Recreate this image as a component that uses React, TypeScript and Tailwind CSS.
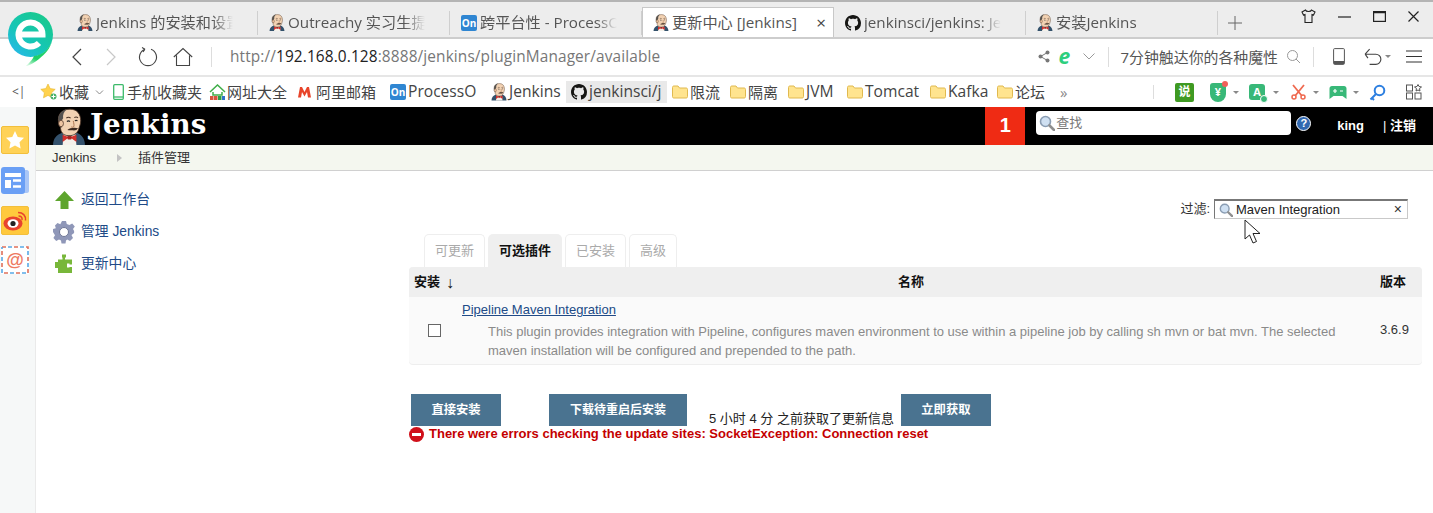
import React from "react";

const CH = '"Open Sans","Noto Sans CJK SC",sans-serif';

function Butler({ s = 16 }: { s?: number }) {
  return (
    <svg width={s} height={s * 1.1} viewBox="0 0 32 35" className="shrink-0">
      <path d="M1 35c0-6 3-10 9-12l6 3 7-3c5 2 8 6 8 12z" fill="#33516b" />
      <path d="M11 24l5 3 6-3 1 11H10z" fill="#f4f1ea" />
      <path d="M10 25l6 2.500-6 4.500zM23 25l-6 2.500 6 4.500z" fill="#d4312c" />
      <rect x="14.500" y="26" width="4" height="3.500" rx="1" fill="#a92420" />
      <path d="M6 11C6 4 11 1 17 1c7 0 10 5 10 11 0 3-1 5-2 8-1 4-5 6-9 6-6 0-8-4-8-8-1-2-2-4-2-7z" fill="#f2d2b3" stroke="#4d3527" strokeWidth=".8" />
      <path d="M9.500 19C7 15 5 11 6.500 7 8 3.500 11 1.500 14 1c-3 2.500-4 5.500-3.500 8.500L9 12c0 2 .5 5 .5 7z" fill="#55524f" />
      <ellipse cx="8.500" cy="14.500" rx="2.300" ry="3" fill="#eec5a2" stroke="#4d3527" strokeWidth=".7" />
      <path d="M13.500 9.500c1-1 3-1 4 0M21 9c1-.7 2.500-.7 3.500.3" fill="none" stroke="#4d3527" strokeWidth="1" />
      <path d="M14 12.500c1-.6 2-.6 3 0M21.500 12c.8-.5 1.800-.5 2.500 0" fill="none" stroke="#222" strokeWidth="1.100" />
      <path d="M20 12c.5 2.500 1 4 .5 5.500-1 .8-2 .5-2.500 0" fill="none" stroke="#a8714f" strokeWidth=".9" />
      <path d="M14.500 20.500c2-2 7-2.500 10-1.500-1 1.500-2 2-4 2-2-.3-4 .3-6-.5z" fill="#3a2a22" />
    </svg>
  );
}

function Github({ s = 16 }: { s?: number }) {
  return (
    <svg width={s} height={s} viewBox="0 0 16 16" className="shrink-0">
      <path
        fill="#161614"
        d="M8 0C3.58 0 0 3.58 0 8c0 3.54 2.29 6.53 5.47 7.59.4.07.55-.17.55-.38 0-.19-.01-.82-.01-1.49-2.01.37-2.53-.49-2.69-.94-.09-.23-.48-.94-.82-1.13-.28-.15-.68-.52-.01-.53.63-.01 1.08.58 1.23.82.72 1.21 1.87.87 2.33.66.07-.52.28-.87.51-1.07-1.78-.2-3.64-.89-3.64-3.95 0-.87.31-1.59.82-2.15-.08-.2-.36-1.02.08-2.12 0 0 .67-.21 2.2.82.64-.18 1.32-.27 2-.27s1.36.09 2 .27c1.53-1.04 2.2-.82 2.2-.82.44 1.1.16 1.92.08 2.12.51.56.82 1.27.82 2.15 0 3.07-1.87 3.75-3.65 3.95.29.25.54.73.54 1.48 0 1.07-.01 1.93-.01 2.2 0 .21.15.46.55.38A8.013 8.013 0 0016 8c0-4.42-3.58-8-8-8z"
      />
    </svg>
  );
}

function On() {
  return (
    <span className="flex h-[16px] w-[16px] shrink-0 items-center justify-center rounded-[2px] bg-[#2f86d2] text-[10px] font-bold leading-none text-white">
      On
    </span>
  );
}

function Folder() {
  return (
    <svg width="16" height="14" viewBox="0 0 16 14" className="shrink-0">
      <path d="M.5 2.500c0-1 .5-1.500 1.500-1.500h4l1.500 2h6.500c1 0 1.500.5 1.500 1.500v7c0 1-.5 1.500-1.500 1.500H2c-1 0-1.500-.5-1.500-1.500z" fill="#ffe48f" stroke="#e0b94f" />
    </svg>
  );
}

function Tab({ icon, text, active, close }: { icon: React.ReactNode; text: string; active?: boolean; close?: boolean }) {
  return (
    <div
      className={
        active
          ? "flex h-[30px] w-[192px] shrink-0 items-center gap-[3px] self-end border-x border-t border-[#c8c8c8] bg-white pl-[10px] pr-[7px] text-[#555]"
          : "mb-[2px] flex h-[24px] w-[192px] shrink-0 items-center gap-[3px] self-end border-r border-[#cfcfcf] pb-[1px] pl-[11px] pr-[24px] text-[#555]"
      }
    >
      {icon}
      <span className={active ? "min-w-0 flex-1 overflow-hidden whitespace-nowrap" : "min-w-0 flex-1 overflow-hidden whitespace-nowrap [mask-image:linear-gradient(to_right,black_85%,transparent)]"}>{text}</span>
      {close && <span className="text-[17px] leading-none text-[#444]">×</span>}
    </div>
  );
}

function Caret({ cls = "" }: { cls?: string }) {
  return <span className={`inline-block h-0 w-0 shrink-0 border-x-[3px] border-t-[3px] border-x-transparent border-t-[#888] ${cls}`} />;
}

function Bm({ icon, text, w, ml, gap, latin, extra }: { icon: React.ReactNode; text: string; w: string; ml: string; gap: string; latin?: boolean; extra?: React.ReactNode }) {
  return (
    <div className={`flex h-[22px] shrink-0 items-center whitespace-nowrap ${w} ${ml}`}>
      <span className={`flex shrink-0 justify-start ${gap}`}>{icon}</span>
      <span className={latin ? "text-[15.600px]" : ""}>{text}</span>
      {extra}
    </div>
  );
}

function Magnifier({ s = 14 }: { s?: number }) {
  return (
    <svg width={s} height={s} viewBox="0 0 16 16" className="shrink-0">
      <circle cx="6.500" cy="6.500" r="5" fill="#cfe0f2" stroke="#8a9db3" strokeWidth="1.600" />
      <path d="M10.500 10.500L15 15" stroke="#8f8f8f" strokeWidth="2.600" strokeLinecap="round" />
    </svg>
  );
}

function NavItem({ icon, text }: { icon: React.ReactNode; text: string }) {
  return (
    <div className="flex h-[32px] items-center">
      <span className="flex w-[24px] shrink-0 justify-center">{icon}</span>
      <span className="ml-[5px] text-[13.800px] text-[#204a87]">{text}</span>
    </div>
  );
}

export default function App() {
  return (
    <div className="relative flex h-[513px] w-[1433px] flex-col overflow-hidden bg-white" style={{ fontFamily: '"Liberation Sans","Noto Sans CJK SC",sans-serif' }}>
      {/* Logo over the browser chrome */}
      <svg width="46" height="55" viewBox="0 0 46 55" className="absolute left-[8px] top-[12px] z-10">
        <defs>
          <linearGradient id="lg" x1="0" y1="1" x2=".8" y2="0">
            <stop offset="0" stopColor="#2bb4f5" />
            <stop offset=".45" stopColor="#16c6b8" />
            <stop offset="1" stopColor="#19c98a" />
          </linearGradient>
          <linearGradient id="lt" x1=".7" y1="0" x2=".2" y2="1">
            <stop offset="0" stopColor="#1fd068" />
            <stop offset=".7" stopColor="#1fd068" />
            <stop offset="1" stopColor="#c8f5d8" />
          </linearGradient>
        </defs>
        <circle cx="22.500" cy="22.500" r="22.500" fill="url(#lg)" />
        <path d="M44 29c-2 8-7 13-13 18-4 3-8 6-13 7 4-4 7-7 8-10 9-1 15-7 18-15z" fill="url(#lt)" />
        <path d="M11 22.500H34.500A12 12 0 1 0 31 31" fill="none" stroke="white" strokeWidth="6" />
      </svg>

      {/* Tab bar */}
      <div className="flex h-[39px] shrink-0 border-t-2 border-b-2 border-t-[#b4b4b4] border-b-[#cdcdcd] bg-[#ededed] pl-[66px] text-[15.200px]" style={{ fontFamily: CH }}>
        <Tab icon={<Butler />} text="Jenkins 的安装和设置" />
        <Tab icon={<Butler />} text="Outreachy 实习生提名" />
        <Tab icon={<On />} text="跨平台性 - ProcessOn" />
        <Tab icon={<Butler />} text="更新中心 [Jenkins]" active close />
        <Tab icon={<Github />} text="jenkinsci/jenkins: Jenkins" />
        <Tab icon={<Butler />} text="安装Jenkins" />
        <div className="flex h-[28px] items-center self-end pl-[10px]">
          <svg width="14" height="14" viewBox="0 0 14 14"><path d="M7 0v14M0 7h14" stroke="#666" strokeWidth="1" /></svg>
        </div>
        <div className="ml-auto flex items-center gap-[22px] pb-[6px] pr-[14px]">
          <svg width="15" height="15" viewBox="0 0 15 15"><path d="M4.500 1L1 3l1.500 3L4 5.500V13.500h7V5.500l1.500.5L14 3l-3.500-2c-.5 2-5.500 2-6 0z" fill="none" stroke="#222" strokeWidth="1.100" /></svg>
          <svg width="13" height="2" viewBox="0 0 13 2"><path d="M0 1h13" stroke="#222" strokeWidth="1.200" /></svg>
          <svg width="13" height="11" viewBox="0 0 13 11"><rect x=".6" y=".6" width="11.800" height="9.800" fill="none" stroke="#222" strokeWidth="1.200" /><path d="M0 1.500h13" stroke="#222" strokeWidth="1.500" /></svg>
          <svg width="11" height="11" viewBox="0 0 11 11"><path d="M.5.500l10 10M10.500.500l-10 10" stroke="#222" strokeWidth="1.200" /></svg>
        </div>
      </div>

      {/* Address bar */}
      <div className="flex h-[38px] shrink-0 items-center border-b-2 border-[#e6e6e6] bg-white" style={{ fontFamily: CH }}>
        <svg width="12" height="18" viewBox="0 0 12 18" className="ml-[71px]"><path d="M10 1L2 9l8 8" fill="none" stroke="#444" strokeWidth="1.200" /></svg>
        <svg width="12" height="18" viewBox="0 0 12 18" className="ml-[22px]"><path d="M2 1l8 8-8 8" fill="none" stroke="#c8c8c8" strokeWidth="1.200" /></svg>
        <svg width="20" height="20" viewBox="0 0 20 20" className="ml-[21px]"><path d="M7 2.200a8.500 8.500 0 1 0 6 0M7 2.200L4 .500M7 2.200L5 5" fill="none" stroke="#444" strokeWidth="1.100" /></svg>
        <svg width="20" height="20" viewBox="0 0 20 20" className="ml-[15px]"><path d="M.8 10L10 1.500 19.200 10M3.500 8.500V18.500h13V8.500" fill="none" stroke="#444" strokeWidth="1.100" /></svg>
        <div className="ml-[18px] h-[20px] w-px bg-[#ddd]" />
        <div className="ml-[18px] text-[15.400px] tracking-[.12px] text-[#777]">
          http://<span className="text-[#222]">192.168.0.128</span>:8888/jenkins/pluginManager/available
        </div>
        <div className="ml-auto flex items-center">
          <svg width="12" height="13" viewBox="0 0 12 13"><circle cx="2.500" cy="6.500" r="2" fill="#777" /><circle cx="9.500" cy="2.500" r="2" fill="#777" /><circle cx="9.500" cy="10.500" r="2" fill="#777" /><path d="M2.500 6.500l7-4M2.500 6.500l7 4" stroke="#777" /></svg>
          <span className="ml-[9px] w-[13px] text-[21px] font-bold italic leading-none text-[#2ecf7e]">e</span>
          <svg width="12" height="7" viewBox="0 0 12 7" className="ml-[11px]"><path d="M.5.500L6 6l5.500-5.500" fill="none" stroke="#999" /></svg>
          <div className="ml-[13px] h-[20px] w-px bg-[#ddd]" />
          <span className="ml-[12px] text-[14.900px] text-[#555]">7分钟触达你的各种魔性</span>
          <svg width="15" height="15" viewBox="0 0 15 15" className="ml-[8px]"><circle cx="6.500" cy="6.500" r="5" fill="none" stroke="#999" /><path d="M10 10l4 4" stroke="#999" /></svg>
          <div className="ml-[12px] h-[20px] w-px bg-[#ddd]" />
          <svg width="12" height="17" viewBox="0 0 12 17" className="ml-[19px]"><rect x=".6" y=".6" width="10.800" height="15.800" rx="1" fill="none" stroke="#555" /><rect x="1" y="13" width="10" height="3" fill="#555" /></svg>
          <svg width="18" height="18" viewBox="0 0 16 16" className="ml-[19px]"><path d="M1 5.500h9.500a4.500 4.500 0 0 1 0 9H5M1 5.500L5 1M1 5.500L3.500 9" fill="none" stroke="#444" strokeWidth="1" /></svg>
          <Caret cls="ml-[3px]" />
          <svg width="16" height="13" viewBox="0 0 16 13" className="ml-[15px] mr-[11px]"><path d="M0 1h16M0 6.500h16M0 12h16" stroke="#333" strokeWidth="1.100" /></svg>
        </div>
      </div>

      {/* Bookmarks */}
      <div className="flex h-[30px] shrink-0 items-center bg-white text-[15px] text-[#444]" style={{ fontFamily: CH }}>
        <span className="ml-[12px] w-[28px] shrink-0 text-[12px] leading-none text-[#555]">&lt;|</span>
        <Bm
          w="w-[65px]" ml="ml-0" gap="w-[19px]"
          icon={<svg width="18" height="18" viewBox="0 0 18 18"><path d="M8 1l2.200 4.600 5 .7-3.600 3.500.9 5L8 12.400 3.500 14.800l.9-5L.8 6.300l5-.7z" fill="#ffd24d" stroke="#e5b52e" strokeWidth=".6" /><circle cx="13.500" cy="13.500" r="3" fill="#46b06a" /><path d="M13.500 11.500v4M11.500 13.500h4" stroke="white" /></svg>}
          text="收藏"
          extra={<svg width="9" height="5" viewBox="0 0 9 5" className="ml-[6px]"><path d="M1 .5l3.500 3.500L8 .5" fill="none" stroke="#888" /></svg>}
        />
        <Bm
          w="w-[88px]" ml="ml-[8px]" gap="w-[14px]" text="手机收藏夹"
          icon={<svg width="11" height="16" viewBox="0 0 11 16"><rect x=".7" y=".7" width="9.600" height="14.600" rx="1" fill="none" stroke="#3dba6a" strokeWidth="1.300" /><path d="M1 13h9" stroke="#3dba6a" strokeWidth="1.300" /></svg>}
        />
        <Bm
          w="w-[78px]" ml="ml-[8px]" gap="w-[18px]" text="网址大全"
          icon={<svg width="17" height="17" viewBox="0 0 17 17"><path d="M1 8l7.500-7L16 8M4 8v3h9V8" fill="none" stroke="#3fae49" strokeWidth="1.500" /><path d="M1 12h3.500v4H1zM5 12h3.500v4H5z" fill="#d6533c" /><path d="M9 12h3.500v4H9z" fill="#2f9d44" /><path d="M13 12h3v4h-3z" fill="#2f72c9" /></svg>}
        />
        <Bm
          w="w-[78px]" ml="ml-[10px]" gap="w-[19px]" text="阿里邮箱"
          icon={<svg width="15" height="12" viewBox="0 0 15 12"><path d="M1 11.500L3 1h2l2.500 5L10 1h2l2 10.500h-3L10 6 7.500 10.500 5 6l-1 5.500z" fill="#e8442a" /></svg>}
        />
        <Bm w="w-[85px]" ml="ml-[15px]" gap="w-[18px]" icon={<On />} text="ProcessO" latin />
        <Bm w="w-[70px]" ml="ml-[16px]" gap="w-[18px]" icon={<Butler />} text="Jenkins" latin />
        <div className="ml-[5px] flex h-[22px] w-[101px] shrink-0 items-center gap-[2px] whitespace-nowrap bg-[#e9e9e9] pl-[5px]">
          <Github />
          <span className="text-[15.600px]">jenkinsci/j</span>
        </div>
        <Bm w="w-[48px]" ml="ml-[5px]" gap="w-[18px]" icon={<Folder />} text="限流" />
        <Bm w="w-[48px]" ml="ml-[10px]" gap="w-[18px]" icon={<Folder />} text="隔离" />
        <Bm w="w-[48px]" ml="ml-[10px]" gap="w-[18px]" icon={<Folder />} text="JVM" latin />
        <Bm w="w-[73px]" ml="ml-[11px]" gap="w-[18px]" icon={<Folder />} text="Tomcat" latin />
        <Bm w="w-[57px]" ml="ml-[10px]" gap="w-[18px]" icon={<Folder />} text="Kafka" latin />
        <Bm w="w-[48px]" ml="ml-[10px]" gap="w-[18px]" icon={<Folder />} text="论坛" />
        <span className="ml-[15px] text-[#888]">»</span>

        <div className="ml-auto flex items-center">
          <div className="mr-[21px] h-[14px] w-px bg-[#ddd]" />
          <span className="flex h-[19px] w-[19px] items-center justify-center rounded-[2px] bg-[#3f9a22] text-[12px] font-bold text-white">说</span>
          <span className="relative ml-[16px] flex h-[19px] w-[16px] items-center justify-center rounded-b-[8px] rounded-t-[3px] bg-[#38b878] text-[11px] font-bold text-white">
            ¥<span className="absolute -right-[2px] -top-[2px] h-[6px] w-[6px] rounded-full bg-[#f0605a]" />
          </span>
          <Caret cls="ml-[7px]" />
          <span className="relative ml-[10px] flex h-[16px] w-[16px] items-center justify-center rounded-[3px] bg-[#38b878] text-[11px] font-bold text-white">
            A<span className="absolute -bottom-[3px] -right-[3px] h-[8px] w-[8px] rounded-full border border-white bg-[#38b878]" />
          </span>
          <Caret cls="ml-[8px]" />
          <svg width="15" height="16" viewBox="0 0 15 16" className="ml-[12px]"><path d="M2 1l9 11M13 1L4 12" stroke="#ef6a50" strokeWidth="1.800" /><circle cx="3" cy="13" r="2" fill="none" stroke="#ef6a50" strokeWidth="1.500" /><circle cx="12" cy="13" r="2" fill="none" stroke="#ef6a50" strokeWidth="1.500" /></svg>
          <Caret cls="ml-[7px]" />
          <svg width="18" height="15" viewBox="0 0 18 15" className="ml-[10px]"><path d="M3 1h12c1.500 0 2.500 1 2.500 2.500V14l-4-3h-9l-4 3V3.500C.5 2 1.500 1 3 1z" fill="#38b878" /><path d="M4 6h4M6 4v4M11 6h3" stroke="white" strokeWidth="1.200" /></svg>
          <Caret cls="ml-[6px]" />
          <svg width="17" height="17" viewBox="0 0 17 17" className="ml-[10px]"><circle cx="10.500" cy="6.500" r="4.800" fill="none" stroke="#2d7fe0" strokeWidth="2" /><path d="M7 10l-5.500 5.500M3 14l2 2" stroke="#2d7fe0" strokeWidth="2" /></svg>
          <svg width="16" height="16" viewBox="0 0 16 16" className="ml-[20px] mr-[11px]"><rect x=".5" y="1" width="6" height="6" fill="none" stroke="#555" /><rect x=".5" y="9" width="6" height="6" fill="none" stroke="#555" /><rect x="9" y="9" width="6" height="6" fill="none" stroke="#555" /><path d="M12 .5l1 2 2.500.5-2 1.500.5 2.500-2-1-2 1 .5-2.500-2-1.500 2.500-.5z" fill="none" stroke="#555" /></svg>
        </div>
      </div>

      {/* Browser body */}
      <div className="flex min-h-0 flex-1">
        {/* Browser sidebar */}
        <div className="flex w-[36px] shrink-0 flex-col items-start border-r border-[#eaeaea] bg-[#f6f8f8] pl-[1px] pt-[19px]">
          <span className="flex h-[28px] w-[28px] items-center justify-center rounded-[2px] border border-[#f2bf3c] bg-[#ffd257]">
            <svg width="20" height="20" viewBox="0 0 16 16"><path d="M8 .8l2.200 4.700 5 .7-3.600 3.500.9 5L8 12.300l-4.500 2.400.9-5L.8 6.200l5-.7z" fill="white" /></svg>
          </span>
          <svg width="28" height="27" viewBox="0 0 28 27" className="mt-[13px]">
            <path d="M20 3h6c1 0 2 1 2 2v19c0 1-1 2-2 2h-6z" fill="#a9c6f7" />
            <rect x="0" y="0" width="24" height="27" rx="3" fill="#6a9ff5" />
            <rect x="4" y="6" width="16" height="4" fill="white" />
            <rect x="4" y="13" width="6" height="8" fill="white" />
            <path d="M12 13.500h8M12 19.500h8" stroke="white" strokeWidth="2.400" />
          </svg>
          <span className="mt-[12px] flex h-[29px] w-[28px] items-center justify-center rounded-[2px] border border-[#f2bf3c] bg-[#ffc93d]">
            <svg width="24" height="20" viewBox="0 0 24 20"><ellipse cx="10" cy="12.500" rx="9.500" ry="7" fill="#e8432e" /><ellipse cx="10" cy="12.500" rx="5.500" ry="4.200" fill="white" /><circle cx="10" cy="12.500" r="2.600" fill="#222" /><path d="M15 1.500c5 0 8 3 7.500 8M15.500 5c2.500 0 4 1.500 3.500 4" fill="none" stroke="#e8432e" strokeWidth="1.500" /></svg>
          </span>
          <span className="relative mt-[11px] flex h-[28px] w-[28px] items-center justify-center bg-white text-[18px] font-bold leading-none text-[#ee7a62]">
            <svg width="28" height="28" viewBox="0 0 28 28" className="absolute left-0 top-0">
              <rect x="1" y="1" width="26" height="26" fill="none" stroke="#e0705a" strokeWidth="1.600" strokeDasharray="4 8" />
              <rect x="1" y="1" width="26" height="26" fill="none" stroke="#57a9e6" strokeWidth="1.600" strokeDasharray="4 8" strokeDashoffset="6" />
            </svg>
            @
          </span>
        </div>

        {/* Jenkins page */}
        <div className="flex min-w-0 flex-1 flex-col">
          <div className="flex h-[38px] shrink-0 items-center overflow-hidden bg-black">
            <span className="ml-[16px] mt-[1px]"><Butler s={34} /></span>
            <span className="mb-[3px] ml-[4px] text-[27.700px] font-bold leading-none text-white" style={{ fontFamily: '"DejaVu Serif",serif' }}>Jenkins</span>
            <span className="ml-auto flex h-full w-[40px] items-center justify-center bg-[#ef2b14] pb-[3px] text-[20px] font-bold text-white">1</span>
            <div className="mb-[6px] ml-[11px] flex h-[24px] w-[255px] items-center rounded-[4px] bg-white pl-[3px] text-[13px] text-[#777]">
              <Magnifier s={16} />
              <span className="ml-[1px]">查找</span>
            </div>
            <span className="mb-[5px] ml-[5px] flex h-[15px] w-[15px] items-center justify-center rounded-full border border-white bg-[#3168b0] text-[11px] font-bold leading-none text-white">?</span>
            <span className="ml-[26px] text-[13px] font-bold text-white">king</span>
            <span className="ml-[19px] mr-[17px] text-[13px] font-bold text-white"><span className="font-normal">| </span>注销</span>
          </div>
          <div className="flex h-[26px] shrink-0 items-center border-b border-[#d0d0d0] bg-[#f4f7ef] pl-[16px] text-[13px] text-[#333]">
            <span>Jenkins</span>
            <span className="ml-[21px] h-0 w-0 border-y-[4px] border-l-[5px] border-y-transparent border-l-[#c3c3c3]" />
            <span className="ml-[16px]">插件管理</span>
          </div>

          <div className="flex min-h-0 flex-1">
            <div className="w-[373px] shrink-0 pl-[16px] pt-[13px]">
              <NavItem
                text="返回工作台"
                icon={<svg width="21" height="20" viewBox="0 0 21 20"><path d="M10.500 1L20 11h-5.500v8h-8v-8H1z" fill="#5ea52e" /></svg>}
              />
              <NavItem
                text="管理 Jenkins"
                icon={<svg width="24" height="24" viewBox="0 0 24 24"><path d="M10 1h4l.8 3 2.600 1.100 2.800-1.500 2.600 2.800L21 9l1.100 2v2L19.500 15l1.500 3-3 3-2.800-1.500L14 20.500l-.5 3h-4l-.5-3-2-1-2.800 1.500-2.800-3 1.600-2.800L1 12v-3l2.800-.8L3 5.500 5.500 3l2.800 1.200z" fill="#8f97b8" /><circle cx="12" cy="12" r="4.500" fill="white" stroke="#6f7796" /></svg>}
              />
              <NavItem
                text="更新中心"
                icon={<svg width="20" height="20" viewBox="0 0 20 20"><path d="M8 .5h4v3h-1v2h7v5h-2.500v-1H13v4h2.500V13H18v6H4v-5H1V8h3V5.500h4.500v-2H8z" fill="#78b73a" /></svg>}
              />
            </div>

            <div className="min-w-0 flex-1 pr-[11px]">
              <div className="mt-[28px] flex h-[20px] items-center justify-end pr-[14px] text-[12px] text-[#333]">
                <span className="mr-[4px] text-[13px]">过滤:</span>
                <div className="relative flex h-[20px] w-[194px] items-center border border-t-2 border-[#c9c9c9] border-l-[#777] border-t-[#777] bg-white pl-[4px]">
                  <Magnifier s={14} />
                  <span className="ml-[3px] text-[13px] text-[#222]">Maven Integration</span>
                  <span className="absolute right-[5px] top-[1px] text-[14px] leading-[15px] text-[#333]">×</span>
                  <svg width="17" height="25" viewBox="0 0 17 25" className="absolute left-[29px] top-[18px] z-10">
                    <path d="M1 1v19l4.500-4 3.500 8 3.500-1.500-3.500-8H16z" fill="white" stroke="#222" strokeWidth="1" />
                  </svg>
                </div>
              </div>

              <div className="mt-[15px] flex h-[33px] items-end gap-[3px] pl-[15px] text-[13px]">
                {[
                  ["可更新", "w-[61px]"],
                  ["可选插件", "w-[74px]"],
                  ["已安装", "w-[61px]"],
                  ["高级", "w-[48px]"],
                ].map(([t, w], i) => (
                  <div
                    key={t}
                    className={
                      i === 1
                        ? `flex h-[33px] ${w} items-center justify-center rounded-t-[5px] bg-[#efefef] font-bold text-[#111]`
                        : `flex h-[33px] ${w} items-center justify-center rounded-t-[5px] border-x border-t border-[#eeeeee] text-[#aaa]`
                    }
                  >
                    {t}
                  </div>
                ))}
              </div>

              <div className="rounded-[4px] bg-[#fafafa] text-[13px] shadow-[0_1px_0_#eeeeee]">
                <div className="flex h-[30px] items-center rounded-t-[4px] bg-[#efefef] font-bold text-[#111]">
                  <div className="flex w-[53px] items-center pl-[5px]">
                    安装<span className="ml-[6px] mt-[2px] text-[16px] font-normal leading-none">↓</span>
                  </div>
                  <div className="flex-1 pr-[20px] text-center">名称</div>
                  <div className="w-[42px]">版本</div>
                </div>
                <div className="flex h-[67px]">
                  <div className="flex w-[53px] items-center justify-start pb-[1px] pl-[19px]">
                    <span className="h-[13px] w-[13px] border border-[#666] bg-white" />
                  </div>
                  <div className="min-w-0 flex-1 pt-[5px]">
                    <div className="leading-[15px] text-[#204a87] underline">Pipeline Maven Integration</div>
                    <div className="mt-[5px] pl-[26px] pr-[12px] leading-[19px] text-[#8a8a8a]">
                      This plugin provides integration with Pipeline, configures maven environment to use within a pipeline job by calling sh mvn or bat mvn. The selected maven installation will be configured and prepended to the path.
                    </div>
                  </div>
                  <div className="flex w-[42px] items-center pb-[2px] text-[#333]">3.6.9</div>
                </div>
              </div>

              <div className="mt-[30px] flex h-[32px] items-start text-[13px]">
                <span className="ml-[2px] flex h-[32px] w-[90px] items-center justify-center bg-[#4a7390] text-[12.300px] font-bold text-white">直接安装</span>
                <span className="ml-[48px] flex h-[32px] w-[138px] items-center justify-center bg-[#4a7390] text-[12px] font-bold text-white">下载待重启后安装</span>
                <span className="ml-[22px] mt-[15px] whitespace-nowrap text-[#222]">5 小时 4 分 之前获取了更新信息</span>
                <span className="ml-[7px] flex h-[32px] w-[90px] items-center justify-center bg-[#4a7390] text-[12.300px] font-bold text-white">立即获取</span>
              </div>
              <div className="flex h-[16px] items-center text-[13px] font-bold text-[#c40000]">
                <span className="flex h-[15px] w-[15px] shrink-0 items-center justify-center rounded-full bg-[#d0101a]">
                  <span className="h-[3px] w-[9px] bg-white" />
                </span>
                <span className="ml-[5px]">There were errors checking the update sites: SocketException: Connection reset</span>
              </div>
            </div>
          </div>
        </div>
      </div>
    </div>
  );
}
